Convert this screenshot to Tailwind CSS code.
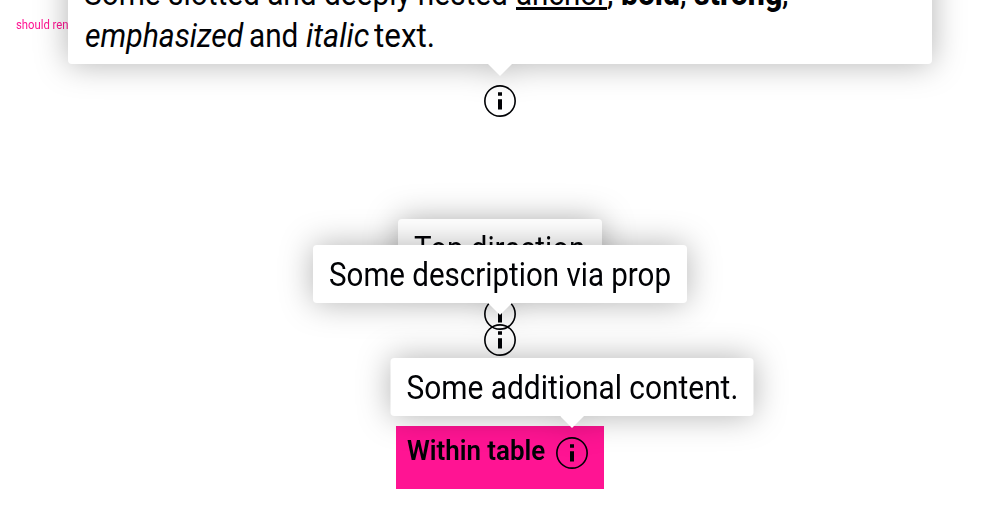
<!DOCTYPE html>
<html lang="en">
<head>
<meta charset="utf-8">
<title>Popover</title>
<script src="https://cdn.jsdelivr.net/npm/@tailwindcss/browser@4"></script>
</head>
<body class="relative h-[532px] overflow-hidden bg-white font-[Roboto,sans-serif] text-[#010205]">
<svg class="hidden">
  <symbol id="info" viewBox="0 0 32 32">
    <circle cx="16" cy="16" r="15.15" fill="none" stroke="currentColor" stroke-width="1.6"/>
    <path d="M14 7.2h4v3.6h-4zM14 14.2h4v10.4h-4z" fill="currentColor"/>
  </symbol>
</svg>
<p class="absolute left-4 top-[17.5px] origin-left scale-x-[.94] whitespace-nowrap text-[12px] leading-[14px] text-[#ff1493]">should render</p>
<main class="flex flex-col items-center pt-[85px]">
  <div class="relative z-10 size-8">
    <svg class="size-8"><use href="#info"/></svg>
    <div class="absolute bottom-[53px] left-1/2 w-[864px] -translate-x-1/2 rounded-[4px] bg-white px-4 pt-[9px] pb-[7px] text-[33px] leading-[42px] drop-shadow-[0_0_16px_rgba(0,0,0,0.3)]">
      <div class="flex whitespace-nowrap">
        <span class="w-[432px]"><span class="inline-block origin-left scale-x-[.903]">Some slotted and deeply nested</span></span>
        <span class="w-[91px]"><span class="inline-block origin-left scale-x-[.896] underline decoration-[3px] underline-offset-[2px]">anchor</span></span>
        <span class="w-[14px]">,</span>
        <span class="w-[59px]"><span class="inline-block origin-left scale-x-[.91] font-extrabold">bold</span></span>
        <span class="w-[14px]">,</span>
        <span class="w-[88px]"><span class="inline-block origin-left scale-x-[.92] font-extrabold">strong</span></span>
        <span>,</span>
      </div>
      <div class="flex whitespace-nowrap">
        <span class="w-[165px] pl-px"><span class="inline-block origin-left scale-x-[.915] italic">emphasized</span></span>
        <span class="w-[57px]"><span class="inline-block origin-left scale-x-[.9]">and</span></span>
        <span class="w-[68px]"><span class="inline-block origin-left scale-x-[.93] italic">italic</span></span>
        <span><span class="inline-block origin-left scale-x-[.95]">text.</span></span>
      </div>
      <i class="absolute left-1/2 top-full -ml-3 h-3 w-6 bg-white [clip-path:polygon(0_0,100%_0,50%_100%)]"></i>
    </div>
  </div>
  <div class="relative mt-[181px] size-8">
    <svg class="size-8"><use href="#info"/></svg>
    <div class="absolute bottom-[53px] left-1/2 h-[58px] w-[204px] -translate-x-1/2 rounded-[4px] bg-white px-4 py-[9px] text-[33px] leading-[42px] drop-shadow-[0_0_16px_rgba(0,0,0,0.3)]">
      <span class="inline-block origin-left scale-x-[.893] whitespace-nowrap">Top direction</span>
      <i class="absolute left-1/2 top-full -ml-3 h-3 w-6 bg-white [clip-path:polygon(0_0,100%_0,50%_100%)]"></i>
    </div>
  </div>
  <div class="relative -mt-[6px] size-8">
    <svg class="size-8"><use href="#info"/></svg>
    <div class="absolute bottom-[53px] left-1/2 h-[58px] w-[374px] -translate-x-1/2 rounded-[4px] bg-white px-4 py-[9px] text-[33px] leading-[42px] drop-shadow-[0_0_16px_rgba(0,0,0,0.3)]">
      <span class="inline-block origin-left scale-x-[.895] whitespace-nowrap">Some description via prop</span>
      <i class="absolute left-1/2 top-full -ml-3 h-3 w-6 bg-white [clip-path:polygon(0_0,100%_0,50%_100%)]"></i>
    </div>
  </div>
  <div class="mt-[70px] flex h-[63px] w-[208px] bg-[#ff1493] pl-[11px] pt-[11px]">
    <span class="w-[149px] text-[27px] font-semibold leading-7"><span class="inline-block origin-left scale-x-[.96] whitespace-nowrap">Within table</span></span>
    <div class="relative size-8">
      <svg class="size-8"><use href="#info"/></svg>
      <div class="absolute bottom-[53px] left-1/2 h-[58px] w-[363px] -translate-x-1/2 rounded-[4px] bg-white px-4 py-[9px] text-[33px] leading-[42px] drop-shadow-[0_0_16px_rgba(0,0,0,0.3)]">
        <span class="inline-block origin-left scale-x-[.905] whitespace-nowrap">Some additional content.</span>
        <i class="absolute left-1/2 top-full -ml-3 h-3 w-6 bg-white [clip-path:polygon(0_0,100%_0,50%_100%)]"></i>
      </div>
    </div>
  </div>
</main>
</body>
</html>
